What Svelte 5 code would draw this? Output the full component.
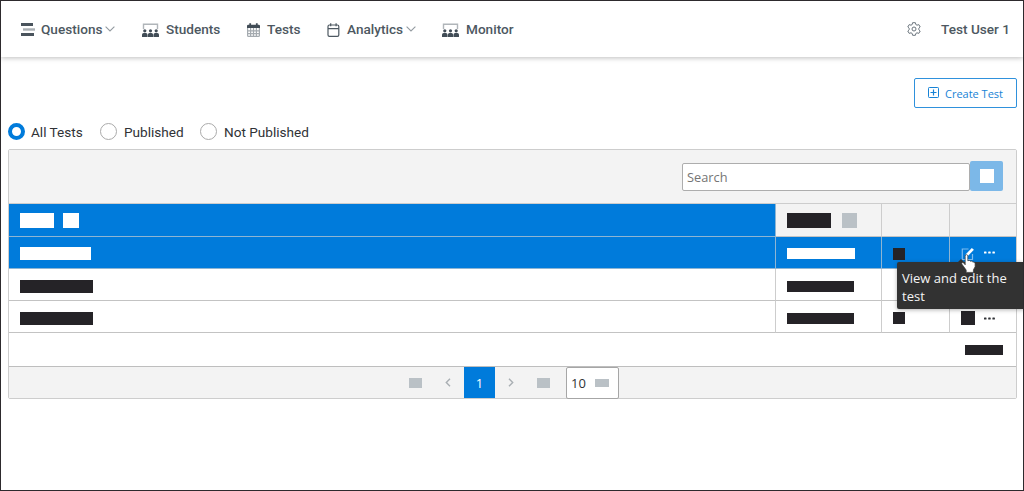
<script>
    const navItems = [
        { label: "Questions", icon: "list", width: 121, menu: true },
        { label: "Students", icon: "group", width: 105 },
        { label: "Tests", icon: "calendar", width: 80 },
        { label: "Analytics", icon: "date", width: 115, menu: true },
        { label: "Monitor", icon: "group", width: 80 }
    ]

    const filters = [
        { label: "All Tests", width: 92 },
        { label: "Published", width: 100 },
        { label: "Not Published", width: 120 }
    ]

    /**
     * Widths of the hidden values in each row
     */
    const rows = [
        { name: 71, date: 68, status: 12, highlighted: true },
        { name: 73, date: 67, status: 0 },
        { name: 73, date: 67, status: 12, actions: true }
    ]

    let selected = $state("All Tests")
    let search = $state("")
</script>

{#snippet icon(name)}
    {#if name === "list"}
        <svg class="icon" width="14" height="13" viewBox="0 0 14 13">
            <path d="M0 1.5h12M0 11.5h13" stroke="#4a545d" stroke-width="2.8" />
            <path d="M2 6.5h12" stroke="#a9afb4" stroke-width="2.4" />
        </svg>
    {:else if name === "group"}
        <svg class="icon" width="17" height="14" viewBox="0 0 17 14">
            <path d="M1.5 6V1.2h14V6" fill="none" stroke="#b0b5b9" stroke-width="1.4" />
            <g fill="#414c56">
                <circle cx="2.8" cy="7.8" r="1.6" />
                <circle cx="8.5" cy="7.8" r="1.6" />
                <circle cx="14.2" cy="7.8" r="1.6" />
                <path d="M0 14v-2.2q0-1.7 1.7-1.7h2.2q1.6 0 1.6 1.7V14zM5.9 14v-2.2q0-1.7 1.6-1.7h2q1.6 0 1.6 1.7V14zM11.5 14v-2.2q0-1.7 1.6-1.7h2.2q1.7 0 1.7 1.7V14z" />
            </g>
        </svg>
    {:else if name === "calendar"}
        <svg class="icon" width="13" height="14" viewBox="0 0 13 14">
            <path d="M.6 5v7.4q0 1 1 1h9.8q1 0 1-1V5M1 7.8h11M1 10.6h11M3.6 5v8M6.5 5v8M9.4 5v8" fill="none" stroke="#a5abb0" stroke-width="1.2" />
            <path d="M0 5V3q0-1.3 1.3-1.3h1V.2h1.8v1.5h4.8V.2h1.8v1.5h1Q13 1.7 13 3v2z" fill="#414c56" />
        </svg>
    {:else if name === "date"}
        <svg class="icon" width="13" height="14" viewBox="0 0 13 14" fill="none" stroke="#4d5861" stroke-width="1.2">
            <rect x="1" y="2" width="10.8" height="11.3" rx="1.4" />
            <path d="M1 5.6h10.8M3.7.2v3M9.1.2v3" />
        </svg>
    {/if}
{/snippet}

<div class="page">
    <header>
        <nav>
            {#each navItems as item}
                <a class="nav-item" href="#{item.label}" style="width: {item.width}px">
                    {@render icon(item.icon)}
                    <span>{item.label}</span>
                    {#if item.menu}
                        <svg class="chevron" width="10" height="6" viewBox="0 0 10 6">
                            <path d="M.6.6 5 5 9.4.6" fill="none" stroke="#949ba1" stroke-width="1.1" />
                        </svg>
                    {/if}
                </a>
            {/each}
        </nav>
        <svg class="gear" width="14" height="14" viewBox="0 0 14 14" fill="none" stroke="#6b757d" stroke-width="1">
            <path d="M5.6.7h2.8l.4 1.8 1.2.7 1.8-.6 1.4 2.4-1.4 1.3v1.4l1.4 1.3-1.4 2.4-1.8-.6-1.2.7-.4 1.8H5.6l-.4-1.8-1.2-.7-1.8.6L.8 9l1.4-1.3V6.3L.8 5l1.4-2.4 1.8.6 1.2-.7z" stroke-linejoin="round" />
            <circle cx="7" cy="7" r="2" />
        </svg>
        <span class="user">Test User 1</span>
    </header>

    <div class="toolbar">
        <button class="create">
            <svg width="11" height="11" viewBox="0 0 11 11" fill="none" stroke="#1783d6">
                <rect x=".5" y=".5" width="10" height="10" rx=".8" />
                <path d="M5.5 2.5v6M2.5 5.5h6" stroke-width="1.2" />
            </svg>
            <span>Create Test</span>
        </button>
    </div>

    <div class="filters">
        {#each filters as filter}
            <button class="filter" style="width: {filter.width}px" onclick={() => (selected = filter.label)}>
                <span class="radio" class:checked={selected === filter.label}></span>
                <span>{filter.label}</span>
            </button>
        {/each}
    </div>

    <section class="panel">
        <div class="search-bar">
            <input type="text" placeholder="Search" bind:value={search} />
            <button class="search-button" aria-label="Search"><span></span></button>
        </div>

        <div class="row head">
            <div class="cell sorted">
                <span class="bar" style="width: 34px"></span>
                <span class="bar" style="width: 16px"></span>
            </div>
            <div class="cell">
                <span class="bar" style="width: 44px"></span>
                <span class="bar muted" style="width: 15px"></span>
            </div>
            <div class="cell"></div>
            <div class="cell"></div>
        </div>

        {#each rows as row}
            <div class="row" class:highlighted={row.highlighted}>
                <div class="cell"><span class="bar" style="width: {row.name}px"></span></div>
                <div class="cell"><span class="bar slim" style="width: {row.date}px"></span></div>
                <div class="cell">
                    {#if row.status}
                        <span class="bar dark" style="width: {row.status}px"></span>
                    {/if}
                </div>
                <div class="cell actions">
                    {#if row.highlighted}
                        <button class="edit" aria-label="Edit">
                            <svg width="14" height="14" viewBox="0 0 14 14" fill="none">
                                <path d="M7.5 2H1.3v10.5h10.2V7" stroke="#7dbcf0" stroke-width="1.2" />
                                <path d="m4.4 9.8.6-2.7L10.8.9l2.1 1.9-6.1 6.3z" fill="#fff" />
                            </svg>
                        </button>
                    {:else if row.actions}
                        <span class="bar square"></span>
                    {/if}
                    {#if row.highlighted || row.actions}
                        <svg class="dots" width="11" height="3" viewBox="0 0 11 3" fill="currentColor">
                            <rect x="0" y=".5" width="2.5" height="2" rx=".5" />
                            <rect x="4.2" y=".5" width="2.5" height="2" rx=".5" />
                            <rect x="8.4" y=".5" width="2.5" height="2" rx=".5" />
                        </svg>
                    {/if}
                    {#if row.highlighted}
                        <div class="tooltip">View and edit the test</div>
                        <svg class="pointer" width="15" height="19" viewBox="0 0 15 19">
                            <path d="M4.2 10.8V2.2q0-1.6 1.3-1.6t1.3 1.6v4.5q2-.8 2.5.5 2-.5 2.4.7 2.4-.2 2.4 1.7v3.1l-1.7 3.1v2.6H5.2v-2.3L1 10.3q-.8-1.5.3-1.9 1.2-.2 2.9 2.4z" fill="#fff" stroke="#3a3a3a" stroke-width=".7" />
                        </svg>
                    {/if}
                </div>
            </div>
        {/each}

        <div class="summary"><span class="bar" style="width: 38px"></span></div>

        <div class="paginator">
            <span class="bar muted end"></span>
            <svg width="6" height="9" viewBox="0 0 6 9"><path d="M5 .8 1.3 4.5 5 8.2" fill="none" stroke="#a9afb3" stroke-width="1.4" /></svg>
            <button class="current">1</button>
            <svg width="6" height="9" viewBox="0 0 6 9"><path d="m1 .8 3.7 3.7L1 8.2" fill="none" stroke="#a9afb3" stroke-width="1.4" /></svg>
            <span class="bar muted end last"></span>
            <button class="page-size">10 <span class="bar muted"></span></button>
        </div>
    </section>
</div>

<style>
    :global(body) {
        background: #fff;
    }
    .page {
        box-sizing: border-box;
        width: 1024px;
        height: 491px;
        border: 1px solid #2d2a2d;
        overflow: hidden;
        background: #fff;
        font-family: Roboto, sans-serif;
        font-size: 13.6px;
        color: #303236;
    }
    button {
        padding: 0;
        border: 0;
        background: none;
        font: inherit;
        color: inherit;
    }
    svg {
        display: block;
        flex: none;
    }

    header {
        display: flex;
        align-items: center;
        height: 56px;
        padding: 0 13px 0 20px;
        box-shadow: 0 1px 5px rgba(0, 0, 0, 0.26);
        color: #4d5861;
        font-weight: 500;
    }
    nav {
        display: flex;
        flex: 1;
    }
    .nav-item {
        display: flex;
        align-items: center;
        color: inherit;
        text-decoration: none;
        white-space: nowrap;
    }
    .icon {
        margin-right: 7px;
        margin-top: 1px;
    }
    .nav-item:first-child .icon {
        margin-right: 6px;
    }
    .chevron {
        margin-left: 3px;
    }
    .gear {
        margin-right: 20px;
        margin-top: -1px;
    }
    .user {
        white-space: nowrap;
    }

    .toolbar {
        display: flex;
        justify-content: flex-end;
        padding: 21px 6px 0 0;
    }
    .create {
        display: flex;
        align-items: center;
        justify-content: center;
        box-sizing: border-box;
        width: 103px;
        height: 30px;
        gap: 6px;
        border: 1px solid #2f91dc;
        border-radius: 2px;
        color: #1783d6;
        font: 11px "Open Sans", sans-serif;
    }
    .create svg {
        margin-top: -1px;
    }

    .filters {
        display: flex;
        height: 17px;
        margin: 15px 0 9px 7px;
    }
    .filter {
        display: flex;
        align-items: center;
        gap: 6px;
        white-space: nowrap;
    }
    .filter + .filter {
        gap: 7px;
    }
    .radio {
        box-sizing: border-box;
        width: 17px;
        height: 17px;
        border: 1px solid #aaa;
        border-radius: 50%;
    }
    .radio.checked {
        border: 4px solid #007bdb;
    }

    .panel {
        box-sizing: border-box;
        width: 1009px;
        margin-left: 7px;
        border: 1px solid #cdcdcd;
        border-radius: 2px;
        font-family: "Open Sans", sans-serif;
    }
    .search-bar {
        display: flex;
        justify-content: flex-end;
        align-items: flex-end;
        box-sizing: border-box;
        height: 54px;
        padding: 0 13px 12px 0;
        border-bottom: 1px solid #cdcdcd;
        background: #f3f3f3;
    }
    input {
        box-sizing: border-box;
        width: 288px;
        height: 28px;
        padding: 0 4px;
        border: 1px solid #adadad;
        border-radius: 2px;
        background: #fff;
        font: 12.8px "Open Sans", sans-serif;
    }
    input::placeholder {
        color: #757575;
    }
    .search-button {
        display: flex;
        align-items: center;
        justify-content: center;
        width: 33px;
        height: 30px;
        border-radius: 2px;
        background: #7cb8e8;
    }
    .search-button span {
        width: 14px;
        height: 14px;
        background: #fff;
    }

    .row {
        display: grid;
        grid-template-columns: 767px 106px 68px 66px;
        height: 32px;
    }
    .cell {
        display: flex;
        align-items: center;
        box-sizing: border-box;
        padding: 3px 0 0 11px;
        border-right: 1px solid #cdcdcd;
        border-bottom: 1px solid #c3c3c3;
    }
    .cell:last-child {
        border-right: 0;
    }
    .bar {
        height: 13px;
        background: #252327;
    }
    .bar.slim {
        height: 11px;
    }
    .bar.dark {
        height: 12px;
    }
    .bar.muted {
        background: #bac1c6;
    }
    .bar.square {
        width: 14px;
        height: 14px;
    }
    .head {
        height: 33px;
        background: #f3f3f3;
    }
    .head .cell {
        gap: 9px;
        padding-top: 0;
    }
    .head .cell:nth-child(2) {
        gap: 11px;
    }
    .head .bar {
        height: 15px;
    }
    .head .sorted,
    .highlighted {
        background: #007bdb;
        color: #fff;
    }
    .highlighted .cell {
        padding-top: 2px;
    }
    .sorted .bar,
    .highlighted .bar:not(.dark) {
        background: #fff;
    }
    .head .sorted,
    .highlighted .cell {
        border-color: #8eb5d3;
    }
    .actions {
        position: relative;
    }
    .dots {
        margin-left: 9px;
    }
    .highlighted .dots {
        margin-top: -2px;
    }
    .edit {
        height: 14px;
    }
    .tooltip {
        position: absolute;
        z-index: 1;
        top: 25px;
        left: -53px;
        box-sizing: border-box;
        width: 128px;
        height: 47px;
        padding: 7px 5px;
        border-radius: 2px;
        background: #323232;
        box-shadow: 0 1px 4px rgba(0, 0, 0, 0.3);
        color: #f4f4f4;
        font-size: 13px;
        line-height: 18px;
    }
    .tooltip::before {
        content: "";
        position: absolute;
        top: -3px;
        left: 61px;
        border: 3px solid transparent;
        border-top: 0;
        border-bottom-color: #323232;
    }
    .pointer {
        position: absolute;
        z-index: 2;
        top: 17px;
        left: 11px;
    }

    .summary {
        display: flex;
        justify-content: flex-end;
        align-items: center;
        box-sizing: border-box;
        height: 34px;
        padding-right: 13px;
        border-bottom: 1px solid #bebebe;
    }
    .summary .bar {
        height: 10px;
    }
    .paginator {
        display: flex;
        align-items: center;
        height: 31px;
        padding-left: 400px;
        background: #f3f3f3;
    }
    .end {
        width: 13px;
        height: 10px;
        margin-right: 23px;
    }
    .current {
        width: 31px;
        height: 31px;
        margin: 0 13px 0 13px;
        background: #007bdb;
        color: #fff;
        font-size: 13px;
    }
    .end.last {
        margin: 0 16px 0 23px;
    }
    .page-size {
        display: flex;
        align-items: center;
        box-sizing: border-box;
        width: 53px;
        height: 32px;
        padding-left: 4px;
        gap: 9px;
        border: 1px solid #a6a6a6;
        border-radius: 2px;
        background: #fff;
        font-size: 13px;
    }
    .page-size .bar {
        width: 14px;
        height: 8px;
    }
</style>
